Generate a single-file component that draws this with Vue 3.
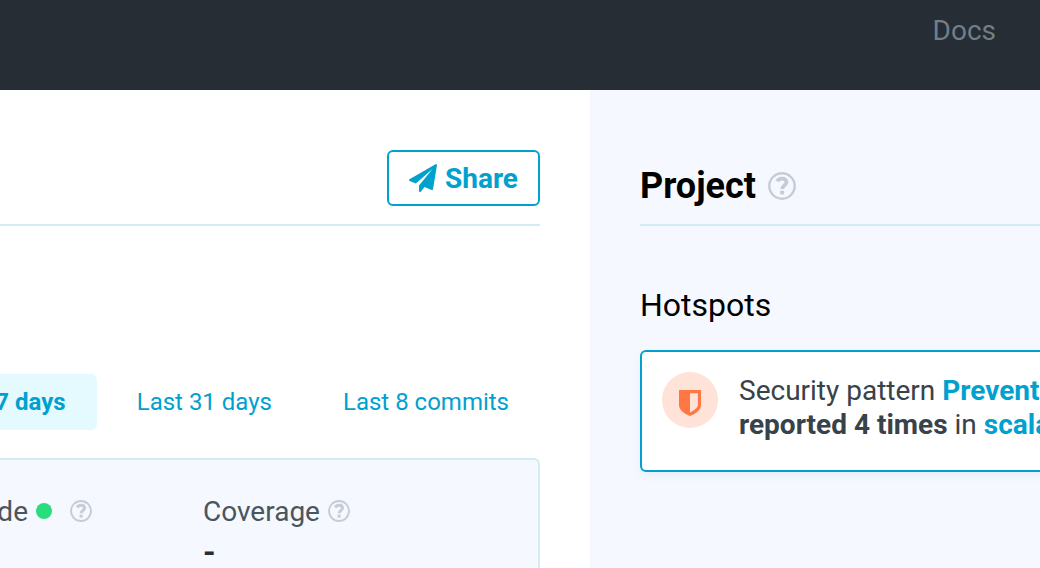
<script setup>
import { ref } from 'vue'

const ranges = ['Last 7 days', 'Last 31 days', 'Last 8 commits']
const selected = ref(0)
const markPath = 'M9.200 9.400C10.300 7.500 12 6.700 14 6.700c2.600 0 4.500 1.500 4.500 3.600 0 2.900-4.300 2.900-4.300 6.700'
</script>

<template>
  <div class="page">
    <header class="topbar">
      <a href="#docs">Docs</a>
    </header>
    <div class="columns">
      <main class="main">
        <div class="content">
          <div class="heading heading-end">
            <button type="button" class="share">
              <svg class="plane" viewBox="0 0 1792 1792" aria-hidden="true">
                <path d="M1764 11q33 24 27 64l-256 1536q-5 29-32 45-14 8-31 8-11 0-24-5l-453-185-242 295q-18 23-49 23-13 0-22-4-19-7-30.500-23.500t-11.500-36.500v-349l864-1059-1069 925-395-162q-37-14-40-55-2-40 32-59l1664-960q15-9 32-9 20 0 36 11z" />
              </svg>
              Share
            </button>
          </div>
          <nav class="ranges">
            <button
              v-for="(range, i) in ranges"
              :key="range"
              type="button"
              class="range"
              :class="{ active: selected === i }"
              @click="selected = i"
            >{{ range }}</button>
          </nav>
          <section class="metrics">
            <div class="metric metric-first">
              <div class="label">
                Code
                <span class="dot"></span>
                <svg class="help" viewBox="0 0 28 28" aria-hidden="true"><circle cx="14" cy="14" r="12.7" /><path class="mark" :d="markPath" /><path class="point" d="M12.200 18.700h3.900v3.700h-3.900z" /></svg>
              </div>
            </div>
            <div class="metric">
              <div class="label">
                Coverage
                <svg class="help" viewBox="0 0 28 28" aria-hidden="true"><circle cx="14" cy="14" r="12.7" /><path class="mark" :d="markPath" /><path class="point" d="M12.200 18.700h3.900v3.700h-3.900z" /></svg>
              </div>
              <strong class="value">-</strong>
            </div>
          </section>
        </div>
      </main>
      <aside class="side">
        <div class="heading">
          <h1>Project</h1>
          <svg class="help help-large" viewBox="0 0 28 28" aria-hidden="true"><circle cx="14" cy="14" r="12.7" /><path class="mark" :d="markPath" /><path class="point" d="M12.200 18.700h3.900v3.700h-3.900z" /></svg>
        </div>
        <h2>Hotspots</h2>
        <article class="card">
          <span class="badge">
            <svg viewBox="0 0 22 26" aria-hidden="true">
              <path d="M0 0H22V15C22 20 17 23.500 11 26 5 23.500 0 20 0 15ZM11 3.200V22.500C16 20 18.900 17.800 18.900 14.600V3.200Z" fill-rule="evenodd" />
            </svg>
          </span>
          <p>
            Security pattern <a href="#pattern">Prevent</a><br />
            <strong>reported 4 times</strong> in <a href="#scala">scala</a>
          </p>
        </article>
      </aside>
    </div>
  </div>
</template>

<style>
body {
  margin: 0;
}
</style>

<style scoped>
.page {
  display: flex;
  flex-direction: column;
  height: 100vh;
  overflow: hidden;
  background: #fff;
  color: #384249;
  font-family: Roboto, "Liberation Sans", sans-serif;
  font-size: 28px;
}
a {
  color: #00a1ce;
  font-weight: 700;
  text-decoration: none;
}
button {
  font-family: inherit;
  color: #00a1ce;
  cursor: pointer;
}
svg {
  display: block;
  flex: none;
  fill: currentColor;
}
.topbar {
  box-sizing: border-box;
  display: flex;
  flex: none;
  justify-content: flex-end;
  height: 90px;
  padding: 14px 44px;
  background: #262d35;
}
.topbar a {
  color: #727e86;
  font-weight: 400;
  line-height: 34px;
}
.columns {
  display: grid;
  flex: 1;
  grid-template-columns: minmax(0, 1fr) 450px;
  min-height: 0;
}
.main {
  display: flex;
  justify-content: flex-end;
  padding: 60px 50px 0 0;
  overflow: hidden;
}
.content {
  flex: none;
  width: 780px;
}
.heading {
  box-sizing: border-box;
  display: flex;
  align-items: center;
  height: 76px;
  padding-bottom: 18px;
  border-bottom: 2px solid #d3ebf2;
}
.heading-end {
  justify-content: flex-end;
}
.share {
  display: flex;
  align-items: center;
  gap: 8px;
  height: 56px;
  padding: 0 20px;
  border: 2px solid #00a1ce;
  border-radius: 6px;
  background: #fff;
  font-size: 28px;
  font-weight: 700;
}
.plane {
  width: 28px;
  height: 28px;
}
.ranges {
  display: flex;
  justify-content: flex-end;
  gap: 9px;
  margin: 148px 0 28px;
}
.range {
  height: 56px;
  padding: 0 31px;
  border: 0;
  border-radius: 6px;
  background: transparent;
  font-size: 24px;
}
.range.active {
  background: #e5fafe;
  font-weight: 700;
}
.metrics {
  box-sizing: border-box;
  display: grid;
  grid-template-columns: 1fr 335px;
  height: 240px;
  padding-top: 34px;
  border: 2px solid #d3ebf2;
  border-radius: 6px;
  background: #f5f8ff;
}
.metric-first {
  display: flex;
  justify-content: flex-end;
  padding-right: 111px;
}
.label {
  display: flex;
  align-items: center;
  gap: 8px;
  height: 34px;
  color: #4a555c;
}
.dot {
  width: 16px;
  height: 16px;
  margin-right: 10px;
  border-radius: 50%;
  background: #2add7c;
}
.help {
  width: 22px;
  height: 22px;
  color: #c6ccd6;
  fill: none;
  stroke: currentColor;
  stroke-width: 2.4;
}
.mark {
  stroke-width: 3.8;
}
.point {
  fill: currentColor;
  stroke: none;
}
.value {
  display: block;
  margin-top: 8px;
  color: #262d35;
  font-size: 32px;
  line-height: 32px;
}
.side {
  padding: 60px 0 0 50px;
  overflow: hidden;
  background: #f5f8ff;
  color: #000;
}
h1 {
  margin: 0;
  font-size: 36px;
  font-weight: 700;
}
.side .heading {
  gap: 12px;
  padding-top: 16px;
}
.help-large {
  width: 28px;
  height: 28px;
}
h2 {
  margin: 59px 0 25px;
  font-size: 32px;
  font-weight: 400;
  line-height: 40px;
}
.card {
  box-sizing: border-box;
  display: flex;
  gap: 21px;
  width: 780px;
  height: 122px;
  padding: 20px;
  border: 2px solid #00a1ce;
  border-radius: 6px;
  background: #fff;
  box-shadow: 0 4px 8px #e8effb;
  color: #384249;
}
.badge {
  display: flex;
  flex: none;
  align-items: center;
  justify-content: center;
  width: 56px;
  height: 56px;
  border-radius: 50%;
  background: #ffe2d8;
  color: #ff7742;
}
.badge svg {
  width: 22px;
  height: 26px;
  margin-top: 6px;
}
.card p {
  margin: 2px 0 0;
  line-height: 34px;
}
</style>
